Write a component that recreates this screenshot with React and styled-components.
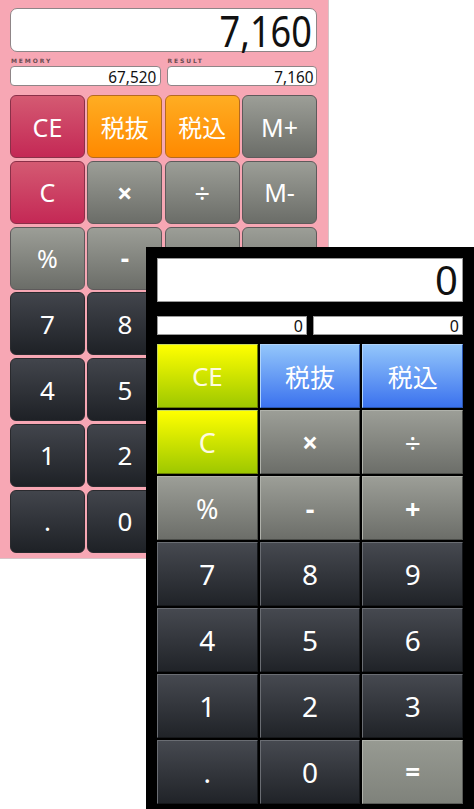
import React from "react";
import styled, { createGlobalStyle, css } from "styled-components";

const Global = createGlobalStyle`
  html, body { margin: 0; padding: 0; background: #ffffff; }
  body { font-family: "Noto Sans", "Open Sans", "Noto Sans CJK JP", sans-serif; }
  * { box-sizing: border-box; }
`;

const Stage = styled.div`
  position: relative;
  width: 474px;
  height: 809px;
  overflow: hidden;
  background: #ffffff;
`;

/* ---------- Pink calculator (back) ---------- */
const PinkPanel = styled.div`
  width: 329px;
  height: 559px;
  background: #f7a7b4;
  border-right: 1px solid #d8c4c8;
  border-bottom: 1px solid #d8c4c8;
  padding: 8px 11px 0 10px;
  display: flex;
  flex-direction: column;
`;

const PinkDisplay = styled.div`
  height: 44px;
  background: #ffffff;
  border: 1px solid #8f8587;
  border-radius: 7px;
  display: flex;
  align-items: center;
  justify-content: flex-end;
  padding-right: 4px;
  font-size: 43px;
  color: #111;
  line-height: 1;
`;

const Condensed = styled.span`
  display: inline-block;
  transform: scaleX(${(p) => p.$x});
  transform-origin: right center;
  white-space: nowrap;
`;

const PinkMemRow = styled.div`
  display: grid;
  grid-template-columns: 1fr 1fr;
  column-gap: 6px;
  margin-top: 5px;
`;

const PinkMemCell = styled.div`
  display: flex;
  flex-direction: column;
`;

const PinkLabel = styled.div`
  font-family: "DejaVu Sans", sans-serif;
  font-size: 6px;
  font-weight: bold;
  letter-spacing: 1.9px;
  color: #6a4c52;
  height: 9px;
  line-height: 8px;
  padding-left: 1px;
`;

const PinkMemBox = styled.div`
  height: 20px;
  background: #ffffff;
  border: 1px solid #8f8587;
  border-radius: 4px;
  display: flex;
  align-items: center;
  justify-content: flex-end;
  padding-right: 3px;
  font-size: 17px;
  color: #111;
`;

const PinkKeys = styled.div`
  margin-top: 9px;
  display: grid;
  grid-template-columns: repeat(4, 1fr);
  grid-template-rows: repeat(7, 63px);
  column-gap: 2.5px;
  row-gap: 2.8px;
`;

const pinkTones = {
  red: css`
    background: linear-gradient(#d45a72, #c42855);
    border-color: #8a3048;
  `,
  orange: css`
    background: linear-gradient(#ffad22, #ff8900);
    border-color: #b56a20;
  `,
  gray: css`
    background: linear-gradient(#9c9e97, #6b6d68);
    border-color: #5e5a5b;
  `,
  dark: css`
    background: linear-gradient(#42454c, #1e2126);
    border-color: #2a2a2e;
  `,
};

const PinkKey = styled.div`
  border: 1px solid;
  border-radius: 6px;
  display: flex;
  align-items: center;
  justify-content: center;
  color: #ffffff;
  font-size: ${(p) => p.$size}px;
  font-weight: ${(p) => (p.$bold ? 700 : 400)};
  ${(p) => pinkTones[p.$tone]}
`;

/* ---------- Black calculator (front, overlapping) ---------- */
const BlackPanel = styled.div`
  position: absolute;
  left: 146px;
  top: 247px;
  width: 328px;
  height: 562px;
  background: #000000;
  padding: 11px 11px 0 11px;
  display: flex;
  flex-direction: column;
`;

const BlackDisplay = styled.div`
  height: 44px;
  background: #ffffff;
  border: 1px solid #9a9a9a;
  display: flex;
  align-items: center;
  justify-content: flex-end;
  padding-right: 4px;
  font-size: 40px;
  color: #111;
  line-height: 1;
`;

const BlackMemRow = styled.div`
  margin-top: 14px;
  display: grid;
  grid-template-columns: 1fr 1fr;
  column-gap: 6px;
`;

const BlackMemBox = styled.div`
  height: 19px;
  background: #ffffff;
  border: 1px solid #9a9a9a;
  display: flex;
  align-items: center;
  justify-content: flex-end;
  padding-right: 3px;
  font-size: 16px;
  color: #111;
`;

const BlackKeys = styled.div`
  margin-top: 9px;
  display: grid;
  grid-template-columns: repeat(3, 1fr);
  grid-template-rows: repeat(7, 64px);
  gap: 2px;
`;

const blackTones = {
  yellow: css`
    background: linear-gradient(#ffff00, #9ec800);
    border-color: #c8d860 #6a8000 #6a8000 #c8d860;
    color: #fffbe0;
  `,
  blue: css`
    background: linear-gradient(#93c6fb, #3b72ee);
    border-color: #b0d4fb #2a55b0 #2a55b0 #b0d4fb;
  `,
  gray: css`
    background: linear-gradient(#9c9e97, #6c6e69);
    border-color: #b0b2ab #4a4c48 #4a4c48 #b0b2ab;
  `,
  equal: css`
    background: linear-gradient(#979a92, #7f827b);
    border-color: #b0b2ab #5a5c58 #5a5c58 #b0b2ab;
  `,
  dark: css`
    background: linear-gradient(#464950, #202328);
    border-color: #6a6d73 #15171a #15171a #6a6d73;
  `,
};

const BlackKey = styled.div`
  border: 1px solid;
  display: flex;
  align-items: center;
  justify-content: center;
  color: #ffffff;
  font-size: ${(p) => p.$size}px;
  font-weight: ${(p) => (p.$bold ? 700 : 400)};
  ${(p) => blackTones[p.$tone]}
`;

/* label, tone, size, bold */
const pinkKeys = [
  ["CE", "red", 25], ["税抜", "orange", 24], ["税込", "orange", 24], ["M+", "gray", 25],
  ["C", "red", 25], ["×", "gray", 27, true], ["÷", "gray", 27], ["M-", "gray", 25],
  ["%", "gray", 25], ["-", "gray", 26, true], ["", "gray", 24], ["", "gray", 24],
  ["7", "dark", 26], ["8", "dark", 26], ["", "dark", 26], ["", "dark", 26],
  ["4", "dark", 26], ["5", "dark", 26], ["", "dark", 26], ["", "dark", 26],
  ["1", "dark", 26], ["2", "dark", 26], ["", "dark", 26], ["", "dark", 26],
  [".", "dark", 26], ["0", "dark", 26], ["", "dark", 26], ["", "dark", 26],
];

const blackKeys = [
  ["CE", "yellow", 26], ["税抜", "blue", 25], ["税込", "blue", 25],
  ["C", "yellow", 27], ["×", "gray", 28, true], ["÷", "gray", 28], 
  ["%", "gray", 27], ["-", "gray", 27, true], ["+", "gray", 27, true],
  ["7", "dark", 28], ["8", "dark", 28], ["9", "dark", 28],
  ["4", "dark", 28], ["5", "dark", 28], ["6", "dark", 28],
  ["1", "dark", 28], ["2", "dark", 28], ["3", "dark", 28],
  [".", "dark", 28], ["0", "dark", 28], ["=", "equal", 26, true],
];

export default function App() {
  return (
    <Stage>
      <Global />
      <PinkPanel>
        <PinkDisplay>
          <Condensed $x={0.84}>7,160</Condensed>
        </PinkDisplay>
        <PinkMemRow>
          <PinkMemCell>
            <PinkLabel>MEMORY</PinkLabel>
            <PinkMemBox>
              <Condensed $x={0.9}>67,520</Condensed>
            </PinkMemBox>
          </PinkMemCell>
          <PinkMemCell>
            <PinkLabel>RESULT</PinkLabel>
            <PinkMemBox>
              <Condensed $x={0.9}>7,160</Condensed>
            </PinkMemBox>
          </PinkMemCell>
        </PinkMemRow>
        <PinkKeys>
          {pinkKeys.map(([label, tone, size, bold], i) => (
            <PinkKey key={i} $tone={tone} $size={size} $bold={bold}>
              {label}
            </PinkKey>
          ))}
        </PinkKeys>
      </PinkPanel>

      <BlackPanel>
        <BlackDisplay>0</BlackDisplay>
        <BlackMemRow>
          <BlackMemBox>0</BlackMemBox>
          <BlackMemBox>0</BlackMemBox>
        </BlackMemRow>
        <BlackKeys>
          {blackKeys.map(([label, tone, size, bold], i) => (
            <BlackKey key={i} $tone={tone} $size={size} $bold={bold}>
              {label}
            </BlackKey>
          ))}
        </BlackKeys>
      </BlackPanel>
    </Stage>
  );
}
